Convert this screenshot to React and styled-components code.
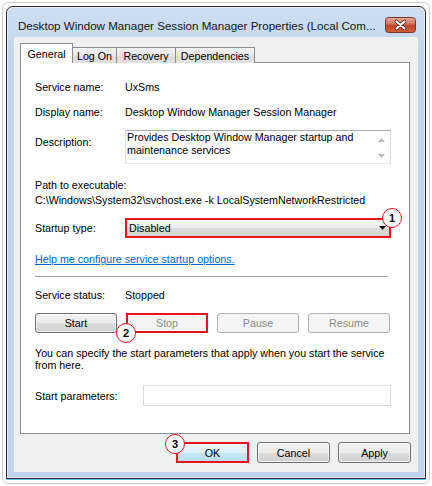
import React from 'react';
import styled, { createGlobalStyle, css } from 'styled-components';

const GlobalStyle = createGlobalStyle`
  html, body { margin: 0; padding: 0; background: #fff; }
  body { font-family: "Liberation Sans", Arial, sans-serif; color: #000; }
  * { box-sizing: border-box; }
`;

const colors = {
  frame: '#c0d5eb',
  frameTop: '#cddff1',
  client: '#f0f0f0',
  tabBorder: '#898c95',
  red: '#e8131c',
  link: '#0066cc',
  disabledText: '#8a8a8a',
};

const Page = styled.div`
  width: 432px;
  height: 486px;
  padding: 2px;
  background: #fff;
`;

const Shell = styled.div`
  height: 100%;
  border: 1px solid #cdcdcd;
  border-radius: 6px;
  padding: 3px 3px 4px 3px;
`;

const Window = styled.div`
  height: 100%;
  display: flex;
  flex-direction: column;
  border: 1px solid #2c2c2c;
  border-radius: 7px 7px 0 0;
  padding: 0 7px 6px 7px;
  background: linear-gradient(${colors.frameTop}, ${colors.frame} 60px);
  box-shadow: inset 0 0 0 1px rgba(255, 255, 255, 0.55), 0 1px 0 #62c9e3;
`;

const TitleBar = styled.div`
  height: 30px;
  padding: 6px 2px 0 4px;
  display: flex;
  align-items: center;
  justify-content: space-between;
`;

const Title = styled.span`
  font-size: 11.6px;
  color: #151515;
  white-space: nowrap;
`;

const Client = styled.div`
  flex: 1;
  display: flex;
  flex-direction: column;
  background: ${colors.client};
  padding: 6px 8px 9px 6px;
`;

const TabStrip = styled.div`
  display: flex;
  align-items: flex-end;
  height: 20px;
  margin-bottom: -1px;
  position: relative;
  z-index: 1;
`;

const Tab = styled.div`
  width: ${(p) => p.$w}px;
  height: ${(p) => (p.$active ? 20 : 16)}px;
  border: 1px solid ${colors.tabBorder};
  border-bottom: none;
  display: flex;
  align-items: center;
  justify-content: center;
  font-size: 10.7px;
  & + & { margin-left: -1px; }
  ${(p) =>
    p.$active
      ? css`background: #fff; position: relative; z-index: 1;`
      : css`background: linear-gradient(#f3f3f3, #e8e8e8 50%, #dcdcdc 51%, #e2e2e2);`}
`;

const Panel = styled.div`
  flex: 1;
  display: flex;
  flex-direction: column;
  background: #fff;
  border: 1px solid ${colors.tabBorder};
  padding: 13px 18px 0 14px;
  font-size: 10.7px;
`;

const FieldRow = styled.div`
  display: grid;
  grid-template-columns: ${(p) => p.$label || 90}px 1fr;
  align-items: ${(p) => p.$align || 'center'};
  min-height: ${(p) => p.$h || 14}px;
  margin-top: ${(p) => p.$mt || 0}px;
`;

const Label = styled.span`
  line-height: 14px;
  padding-top: ${(p) => p.$pt || 0}px;
`;

const Line = styled.div`
  line-height: 14px;
  margin-top: ${(p) => p.$mt || 0}px;
  white-space: nowrap;
`;

const TextBox = styled.div`
  height: 34px;
  display: flex;
  background: #fff;
  border: 1px solid;
  border-color: #abadb3 #dbdfe6 #e3e9ef #e2e3ea;
`;

const TextBoxText = styled.div`
  flex: 1;
  padding: 0 1px;
  line-height: 13px;
`;

const ScrollCol = styled.div`
  width: 17px;
  display: flex;
  flex-direction: column;
  justify-content: space-between;
  align-items: center;
  padding: 7px 0 5px;
`;

const Combo = styled.div`
  position: relative;
  height: 20px;
  display: flex;
  align-items: center;
  justify-content: space-between;
  padding: 0 3px 0 2px;
  border: 2px solid ${colors.red};
  background: linear-gradient(#f4f4f4, #ececec 48%, #dedede 52%, #d3d3d3);
`;

const Link = styled.a`
  color: ${colors.link};
  text-decoration: underline;
  line-height: 14px;
  margin-top: 14px;
  cursor: pointer;
`;

const Separator = styled.div`
  height: 1px;
  background: #a0a0a0;
  margin: 10px 3px 0 0;
`;

const ServiceButtons = styled.div`
  display: grid;
  grid-template-columns: repeat(4, 82px);
  gap: 9px;
  margin-top: 11px;
`;

const Button = styled.button`
  position: relative;
  width: ${(p) => (p.$w ? `${p.$w}px` : 'auto')};
  height: ${(p) => p.$h || 21}px;
  padding: 0;
  font-family: inherit;
  font-size: 10.7px;
  color: #000;
  border: 1px solid #707070;
  border-radius: 3px;
  background: linear-gradient(#f2f2f2, #ebebeb 50%, #dddddd 51%, #cfcfcf);
  box-shadow: inset 0 0 0 1px rgba(255, 255, 255, 0.7);
  ${(p) =>
    p.$disabled &&
    css`
      color: ${colors.disabledText};
      border-color: #adb2b5;
      background: #f4f4f4;
      box-shadow: none;
    `}
  ${(p) =>
    p.$default &&
    css`
      background: linear-gradient(#ecf7fd, #dcf1fc 50%, #c7e8fa 51%, #b7dff5);
    `}
  ${(p) =>
    p.$marked &&
    css`
      border: 2px solid ${colors.red};
      border-radius: 0;
      box-shadow: none;
    `}
`;

const Note = styled.p`
  margin: 14px 0 0;
  line-height: 12px;
`;

const InputBox = styled.div`
  height: 21px;
  background: #fff;
  border: 1px solid #dadee3;
`;

const BottomBar = styled.div`
  display: flex;
  justify-content: flex-end;
  gap: 8px;
  margin: 8px -1px 0 0;
`;

const Badge = styled.span`
  position: absolute;
  width: 20px;
  height: 20px;
  border-radius: 50%;
  border: 1.5px solid ${colors.red};
  background: #fff;
  display: flex;
  align-items: center;
  justify-content: center;
  font: bold 11px "Liberation Sans", Arial, sans-serif;
  color: #000;
  z-index: 2;
  ${(p) => p.$pos}
`;

const CloseButton = () => (
  <svg width="31" height="16" viewBox="0 0 31 16">
    <defs>
      <linearGradient id="cb" x1="0" y1="0" x2="0" y2="1">
        <stop offset="0" stopColor="#e9a899" />
        <stop offset="0.45" stopColor="#d47360" />
        <stop offset="0.5" stopColor="#c0432a" />
        <stop offset="1" stopColor="#d4603c" />
      </linearGradient>
    </defs>
    <rect x="0.5" y="0.5" width="30" height="15" rx="3" fill="url(#cb)" stroke="#7a3428" />
    <path d="M11.5 4.5 L19.5 11.5 M19.5 4.5 L11.5 11.5" stroke="#4b231c" strokeWidth="3.6" strokeLinecap="round" />
    <path d="M11.5 4.5 L19.5 11.5 M19.5 4.5 L11.5 11.5" stroke="#fff" strokeWidth="2" strokeLinecap="round" />
  </svg>
);

const Arrow = ({ up, color = '#000' }) => (
  <svg width="7" height="4" viewBox="0 0 7 4">
    <path d={up ? 'M0 4 L3.5 0 L7 4 Z' : 'M0 0 L7 0 L3.5 4 Z'} fill={color} />
  </svg>
);

const tabs = [
  { name: 'General', w: 53, active: true },
  { name: 'Log On', w: 45 },
  { name: 'Recovery', w: 60 },
  { name: 'Dependencies', w: 80 },
];

export default function App() {
  return (
    <Page>
      <GlobalStyle />
      <Shell>
        <Window>
          <TitleBar>
            <Title>Desktop Window Manager Session Manager Properties (Local Com...</Title>
            <CloseButton />
          </TitleBar>
          <Client>
            <TabStrip>
              {tabs.map((t) => (
                <Tab key={t.name} $w={t.w} $active={t.active}>
                  {t.name}
                </Tab>
              ))}
            </TabStrip>
            <Panel>
              <FieldRow $h={22}>
                <Label>Service name:</Label>
                <span>UxSms</span>
              </FieldRow>
              <FieldRow $h={22} $mt={3}>
                <Label>Display name:</Label>
                <span>Desktop Window Manager Session Manager</span>
              </FieldRow>
              <FieldRow $mt={7} $align="start">
                <Label $pt={5}>Description:</Label>
                <TextBox>
                  <TextBoxText>Provides Desktop Window Manager startup and maintenance services</TextBoxText>
                  <ScrollCol>
                    <Arrow up color="#b8b8b8" />
                    <Arrow color="#b8b8b8" />
                  </ScrollCol>
                </TextBox>
              </FieldRow>
              <Line $mt={14}>Path to executable:</Line>
              <Line $mt={1}>{'C:\\Windows\\System32\\svchost.exe -k LocalSystemNetworkRestricted'}</Line>
              <FieldRow $mt={11}>
                <Label>Startup type:</Label>
                <Combo>
                  <span>Disabled</span>
                  <Arrow />
                  <Badge $pos="right: -13px; top: -12px;">1</Badge>
                </Combo>
              </FieldRow>
              <Link>Help me configure service startup options.</Link>
              <Separator />
              <FieldRow $mt={11}>
                <Label>Service status:</Label>
                <span>Stopped</span>
              </FieldRow>
              <ServiceButtons>
                <Button $h={20}>Start</Button>
                <Button $h={20} $disabled $marked>
                  Stop
                  <Badge $pos="left: -12px; bottom: -12px;">2</Badge>
                </Button>
                <Button $h={20} $disabled>Pause</Button>
                <Button $h={20} $disabled>Resume</Button>
              </ServiceButtons>
              <Note>
                You can specify the start parameters that apply when you start the service
                <br />
                from here.
              </Note>
              <FieldRow $label={108} $mt={14}>
                <Label>Start parameters:</Label>
                <InputBox />
              </FieldRow>
            </Panel>
            <BottomBar>
              <Button $w={73} $default $marked>
                OK
                <Badge $pos="left: -13px; top: -10px;">3</Badge>
              </Button>
              <Button $w={73}>Cancel</Button>
              <Button $w={73}>Apply</Button>
            </BottomBar>
          </Client>
        </Window>
      </Shell>
    </Page>
  );
}
